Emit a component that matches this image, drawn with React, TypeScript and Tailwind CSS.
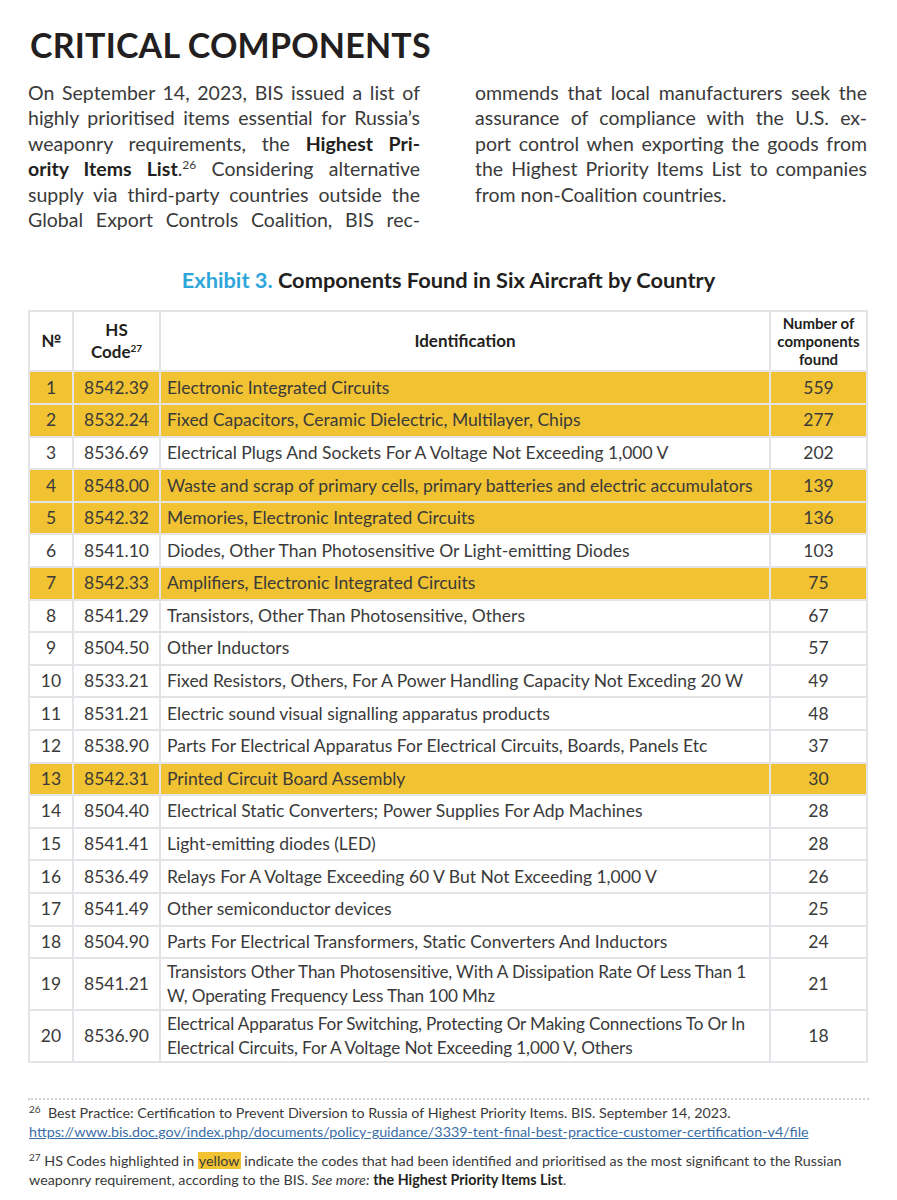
import React from 'react'

const rows: { n: number; code: string; name: string[]; count: number; hl: boolean }[] = [
  { n: 1, code: '8542.39', name: ['Electronic Integrated Circuits'], count: 559, hl: true },
  { n: 2, code: '8532.24', name: ['Fixed Capacitors, Ceramic Dielectric, Multilayer, Chips'], count: 277, hl: true },
  { n: 3, code: '8536.69', name: ['Electrical Plugs And Sockets For A Voltage Not Exceeding 1,000 V'], count: 202, hl: false },
  { n: 4, code: '8548.00', name: ['Waste and scrap of primary cells, primary batteries and electric accumulators'], count: 139, hl: true },
  { n: 5, code: '8542.32', name: ['Memories, Electronic Integrated Circuits'], count: 136, hl: true },
  { n: 6, code: '8541.10', name: ['Diodes, Other Than Photosensitive Or Light-emitting Diodes'], count: 103, hl: false },
  { n: 7, code: '8542.33', name: ['Amplifiers, Electronic Integrated Circuits'], count: 75, hl: true },
  { n: 8, code: '8541.29', name: ['Transistors, Other Than Photosensitive, Others'], count: 67, hl: false },
  { n: 9, code: '8504.50', name: ['Other Inductors'], count: 57, hl: false },
  { n: 10, code: '8533.21', name: ['Fixed Resistors, Others, For A Power Handling Capacity Not Exceding 20 W'], count: 49, hl: false },
  { n: 11, code: '8531.21', name: ['Electric sound visual signalling apparatus products'], count: 48, hl: false },
  { n: 12, code: '8538.90', name: ['Parts For Electrical Apparatus For Electrical Circuits, Boards, Panels Etc'], count: 37, hl: false },
  { n: 13, code: '8542.31', name: ['Printed Circuit Board Assembly'], count: 30, hl: true },
  { n: 14, code: '8504.40', name: ['Electrical Static Converters; Power Supplies For Adp Machines'], count: 28, hl: false },
  { n: 15, code: '8541.41', name: ['Light-emitting diodes (LED)'], count: 28, hl: false },
  { n: 16, code: '8536.49', name: ['Relays For A Voltage Exceeding 60 V But Not Exceeding 1,000 V'], count: 26, hl: false },
  { n: 17, code: '8541.49', name: ['Other semiconductor devices'], count: 25, hl: false },
  { n: 18, code: '8504.90', name: ['Parts For Electrical Transformers, Static Converters And Inductors'], count: 24, hl: false },
  {
    n: 19,
    code: '8541.21',
    name: ['Transistors Other Than Photosensitive, With A Dissipation Rate Of Less Than 1', 'W, Operating Frequency Less Than 100 Mhz'],
    count: 21,
    hl: false,
  },
  {
    n: 20,
    code: '8536.90',
    name: ['Electrical Apparatus For Switching, Protecting Or Making Connections To Or In', 'Electrical Circuits, For A Voltage Not Exceeding 1,000 V, Others'],
    count: 18,
    hl: false,
  },
]

const leftLines: React.ReactNode[] = [
  'On September 14, 2023, BIS issued a list of',
  'highly prioritised items essential for Russia’s',
  <>weaponry requirements, the <b className="font-bold text-[#231f20]">Highest Pri-</b></>,
  <>
    <b className="font-bold text-[#231f20]">ority Items List</b>.<sup className="text-[12px] -top-[7px]">26</sup> Considering alternative
  </>,
  'supply via third-party countries outside the',
  'Global Export Controls Coalition, BIS rec-',
]

const rightLines = [
  'ommends that local manufacturers seek the',
  'assurance of compliance with the U.S. ex-',
  'port control when exporting the goods from',
  'the Highest Priority Items List to companies',
]

function Line({ children, last }: { children: React.ReactNode; last?: boolean }) {
  return <div className={last ? 'text-left' : 'text-justify [text-align-last:justify]'}>{children}</div>
}

export default function App() {
  return (
    <div className="w-[897px] h-[1200px] bg-white text-[#3a3a3a] font-['Lato','Noto_Sans',sans-serif] pt-[27px] px-[28px] overflow-hidden">
      <h1 className="text-[34px] leading-[36px] font-bold text-[#231f20] tracking-[0.2px] pl-[2px]">CRITICAL COMPONENTS</h1>

      <div className="grid grid-cols-[392px_392px] gap-x-[55px] mt-[17px] text-[19.5px] leading-[25.4px]">
        <div>
          {leftLines.map((l, i) => (
            <Line key={i}>{l}</Line>
          ))}
        </div>
        <div>
          {rightLines.map((l, i) => (
            <Line key={i}>{l}</Line>
          ))}
          <Line last>from non-Coalition countries.</Line>
        </div>
      </div>

      <h2 className="text-center mt-[35px] text-[21.8px] leading-[26px] font-bold text-[#231f20]">
        <span className="text-[#2ea6da]">Exhibit 3.</span> Components Found in Six Aircraft by Country
      </h2>

      <table className="mt-[17px] w-[838px] border-collapse text-[17.5px] leading-[22px] table-fixed">
        <colgroup>
          <col className="w-[44px]" />
          <col className="w-[87px]" />
          <col className="w-[610px]" />
          <col className="w-[97px]" />
        </colgroup>
        <thead>
          <tr className="h-[60px] font-bold text-[#231f20]">
            <th className="border-2 border-[#e4e4e8] text-[17px]">№</th>
            <th className="border-2 border-[#e4e4e8] text-[17px] leading-[22px]">
              HS
              <br />
              Code<sup className="text-[10px] -top-[6px]">27</sup>
            </th>
            <th className="border-2 border-[#e4e4e8] text-[17px]">Identification</th>
            <th className="border-2 border-[#e4e4e8] text-[15px] leading-[18px]">
              Number of
              <br />
              components
              <br />
              found
            </th>
          </tr>
        </thead>
        <tbody>
          {rows.map((r) => (
            <tr
              key={r.n}
              className={`${r.hl ? 'bg-[#f1c232]' : 'bg-white'} ${r.name.length > 1 ? 'h-[52px]' : 'h-[32.6px]'}`}
            >
              <td className="border-2 border-[#e4e4e8] text-center">{r.n}</td>
              <td className="border-2 border-[#e4e4e8] text-center">{r.code}</td>
              <td
                className={`border-2 border-[#e4e4e8] px-[6px] leading-[24px] ${
                  r.name.length > 1 ? 'text-[17.2px] tracking-[-0.15px]' : ''
                }`}
              >
                {r.name.map((t, i) => (
                  <div key={i} className="whitespace-nowrap">
                    {t}
                  </div>
                ))}
              </td>
              <td className="border-2 border-[#e4e4e8] text-center">{r.count}</td>
            </tr>
          ))}
        </tbody>
      </table>

      <div className="mt-[35px] border-t-2 border-dotted border-[#cfcfcf]" />

      <div className="mt-[3px] text-[14.3px] leading-[19px] pl-[1px]">
        <p>
          <sup className="text-[10px] -top-[5px]">26</sup>&nbsp; Best Practice: Certification to Prevent Diversion to Russia of Highest
          Priority Items. BIS. September 14, 2023.
          <br />
          <a className="text-[#3b6ea5] underline" href="#">
            https://www.bis.doc.gov/index.php/documents/policy-guidance/3339-tent-final-best-practice-customer-certification-v4/file
          </a>
        </p>
        <p className="mt-[10px]">
          <sup className="text-[10px] -top-[5px]">27</sup> HS Codes highlighted in{' '}
          <span className="bg-[#f1c232] px-[1px]">yellow</span> indicate the codes that had been identified and prioritised as the
          most significant to the Russian
          <br />
          weaponry requirement, according to the BIS. <i>See more:</i>{' '}
          <b className="font-bold text-[#231f20]">the Highest Priority Items List</b>.
        </p>
      </div>
    </div>
  )
}
